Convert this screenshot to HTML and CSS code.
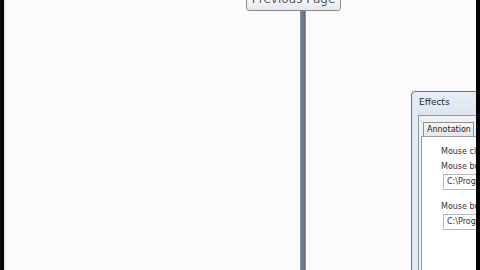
FILE: index.html
```html
<!DOCTYPE html>
<html>
<head>
<meta charset="utf-8">
<link rel="stylesheet" href="styles.css">
</head>
<body>
<div class="screen">
  <div class="edge-left"></div>
  <div class="desktop">
    <div class="tooltip">Previous Page</div>
    <div class="splitter"></div>
    <div class="window">
      <div class="title">Effects</div>
      <div class="client">
        <div class="tabs"><div class="tab">Annotation</div></div>
        <div class="panel">
          <div class="label">Mouse click</div>
          <div class="label">Mouse button down</div>
          <div class="field">C:\Program Files</div>
          <div class="label gap">Mouse button up</div>
          <div class="field">C:\Program Files</div>
        </div>
      </div>
    </div>
  </div>
  <div class="edge-right"></div>
</div>
</body>
</html>
```

FILE: styles.css
```css
html, body {
  margin: 0;
  padding: 0;
  width: 480px;
  height: 270px;
  overflow: hidden;
  background: #050505;
  font-family: "DejaVu Sans", "Liberation Sans", sans-serif;
}
.screen {
  display: grid;
  grid-template-columns: 2px 4px 1fr 4px;
  width: 480px;
  height: 270px;
  overflow: hidden;
}
.edge-left {
  grid-column: 1;
  background: #0a0a0a;
  box-shadow: 4px 0 0 #eeeeee;
}
.edge-right {
  grid-column: 4;
  background: #030303;
}
.desktop {
  grid-column: 3;
  min-width: 0;
  position: relative;
  overflow: hidden;
  background: #fbfbfc;
}
.tooltip {
  position: absolute;
  left: 240px;
  top: -6px;
  width: 93px;
  height: 15px;
  border: 1px solid #8a8c90;
  border-radius: 3px;
  background: linear-gradient(#ffffff, #e4e6ee);
  color: #55585e;
  font-size: 12px;
  line-height: 9px;
  text-align: center;
  white-space: nowrap;
  box-sizing: content-box;
}
.splitter {
  position: absolute;
  left: 294px;
  top: 11px;
  width: 6px;
  bottom: 0;
  background: linear-gradient(90deg, #95a1b0 0, #728093 1px, #6e7b8d 4px, #5a6676 5px, #bcc3cb 6px);
}
.window {
  position: absolute;
  left: 405px;
  top: 91px;
  right: -20px;
  bottom: -10px;
  border: 1px solid #6b737c;
  border-radius: 4px 0 0 0;
  background: linear-gradient(90deg, #dde6ef, #e9eef4 4px, #d8e2ec 7px);
  padding: 0 0 0 6px;
  display: flex;
  flex-direction: column;
}
.title {
  height: 23px;
  padding-left: 1px;
  font-size: 9px;
  line-height: 20px;
  color: #1f2a36;
  background: linear-gradient(#e8eef5, #dce5ee);
}
.client {
  flex: 1;
  border: 1px solid #8b9aa8;
  border-right: none;
  background: #f0f0f0;
  padding: 6px 0 0 2px;
  display: flex;
  flex-direction: column;
}
.tabs {
  display: flex;
  padding-left: 2px;
}
.tab {
  height: 13px;
  padding: 0 2px 0 3px;
  border: 1px solid #8d8f93;
  border-bottom: none;
  background: linear-gradient(#f7f7f7, #e6e6e6);
  font-size: 8px;
  line-height: 13px;
  color: #222;
}
.panel {
  flex: 1;
  background: #ffffff;
  border: 1px solid #9a9ca0;
  border-right: none;
  padding: 7px 0 0 19px;
}
.label {
  font-size: 8px;
  line-height: 15px;
  color: #333;
  white-space: nowrap;
}
.label.gap {
  margin-top: 9px;
}
.field {
  margin-left: 2px;
  height: 14px;
  border: 1px solid #b7b9bd;
  border-right: none;
  padding-left: 3px;
  font-size: 8px;
  line-height: 14px;
  color: #333;
  white-space: nowrap;
}
```
